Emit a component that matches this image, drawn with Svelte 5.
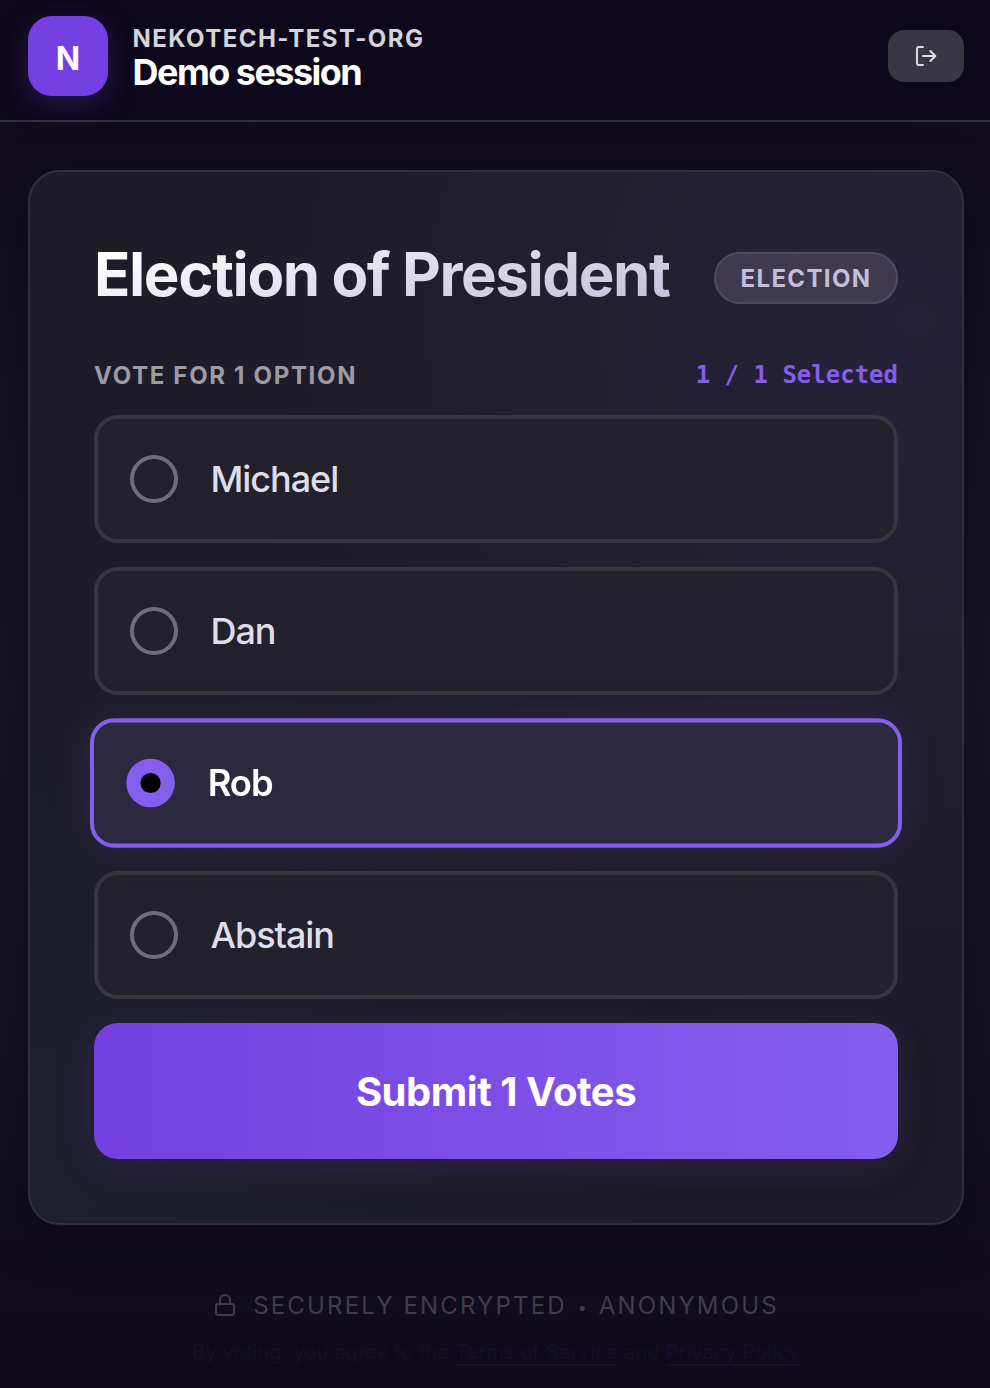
<script>
    /** @type {string[]} */
    const options = ['Michael', 'Dan', 'Rob', 'Abstain']
    const maxVotes = 1

    /** @type {string[]} */
    let selected = $state(['Rob'])

    /**
     * @param {string} name
     */
    function toggle(name) {
        if (selected.includes(name)) {
            selected = selected.filter((s) => s !== name)
            return
        }
        selected = maxVotes === 1 ? [name] : [...selected, name].slice(0, maxVotes)
    }
</script>

<div class="page">
    <header>
        <div class="brand">
            <div class="logo">N</div>
            <div class="names">
                <span class="org">NEKOTECH-TEST-ORG</span>
                <span class="session">Demo session</span>
            </div>
        </div>
        <button class="logout" aria-label="Log out">
            <svg width="24" height="24" viewBox="0 0 24 24">
                <path d="M9 3H5a2 2 0 0 0-2 2v14a2 2 0 0 0 2 2h4" />
                <path d="M9 12h12.2M16.4 7l5 5-5 5" />
            </svg>
        </button>
    </header>

    <main>
        <section class="card">
            <div class="title-row">
                <h1>Election of President</h1>
                <span class="pill">ELECTION</span>
            </div>
            <div class="info-row">
                <span class="hint">VOTE FOR {maxVotes} OPTION</span>
                <span class="count">{selected.length} / {maxVotes} Selected</span>
            </div>
            <div class="options">
                {#each options as name}
                    <button class="option" class:active={selected.includes(name)} onclick={() => toggle(name)}>
                        <span class="radio"></span>
                        <span class="name">{name}</span>
                    </button>
                {/each}
                <button class="submit">Submit {selected.length} Votes</button>
            </div>
        </section>
    </main>

    <footer>
        <div class="secure">
            <svg width="24" height="24" viewBox="0 0 24 24">
                <rect x="3" y="11" width="18" height="11" rx="2" />
                <path d="M7 11V7a5 5 0 0 1 10 0v4" />
            </svg>
            <span>SECURELY ENCRYPTED <span class="dot">•</span> ANONYMOUS</span>
        </div>
        <p class="legal">By voting, you agree to the <a href="#terms">Terms of Service</a> and <a href="#privacy">Privacy Policy</a></p>
    </footer>
</div>

<style>
    :global(body) {
        background: #0e091b;
    }
    .page {
        box-sizing: border-box;
        width: 990px;
        height: 1388px;
        overflow: hidden;
        display: flex;
        flex-direction: column;
        font-family: Inter, "Liberation Sans", sans-serif;
        background: linear-gradient(180deg, #0d081b 0%, #120e1e 12%, #1a1726 50%, #15111f 80%, #110c1e 93%, #0f0a1b 100%);
    }
    button {
        font-family: inherit;
        border: none;
        cursor: pointer;
    }
    svg {
        fill: none;
        stroke: currentColor;
        stroke-width: 2;
        stroke-linecap: round;
        stroke-linejoin: round;
    }

    /* HEADER */
    header {
        display: flex;
        justify-content: space-between;
        align-items: center;
        box-sizing: border-box;
        height: 122px;
        padding: 0 26px 8px 28px;
        border-bottom: 2px solid #34313e;
        background: #0d081b;
        flex: none;
    }
    .brand {
        display: flex;
        align-items: center;
        gap: 24px;
    }
    .logo {
        display: flex;
        align-items: center;
        justify-content: center;
        box-sizing: border-box;
        width: 80px;
        height: 80px;
        padding-top: 5px;
        border-radius: 24px;
        background: #763fe1;
        color: #fff;
        font-size: 32px;
        font-weight: 700;
        box-shadow: 0 8px 30px rgba(118, 63, 225, 0.25);
    }
    .names {
        display: flex;
        flex-direction: column;
        padding: 2px 0 0 0.5px;
    }
    .org {
        color: #d4d3dc;
        font-size: 24px;
        font-weight: 700;
        line-height: 29px;
        letter-spacing: 1.46px;
    }
    .session {
        color: #fff;
        font-size: 36px;
        font-weight: 700;
        line-height: 38px;
        letter-spacing: -1.53px;
    }
    .logout {
        display: flex;
        align-items: center;
        justify-content: center;
        width: 76px;
        height: 52px;
        padding: 0;
        border-radius: 16px;
        background: #393741;
        color: #dddce3;
    }

    /* CARD */
    main {
        padding: 48px 26px 0 28px;
    }
    .card {
        box-sizing: border-box;
        height: 1055px;
        padding: 64px;
        border: 2px solid #33303c;
        border-radius: 32px;
        background:
            radial-gradient(circle at 95% 14%, rgba(68, 56, 122, 0.22), transparent 58%),
            radial-gradient(circle at 0% 92%, rgba(30, 50, 78, 0.2), transparent 48%),
            #1e1c27;
        box-shadow: 0 12px 52px rgba(0, 0, 0, 0.34);
    }
    .title-row {
        display: flex;
        justify-content: space-between;
        align-items: center;
        height: 84px;
    }
    h1 {
        margin: 0;
        padding-bottom: 8px;
        font-size: 60px;
        font-weight: 700;
        line-height: 75px;
        letter-spacing: -1.43px;
        background: linear-gradient(165deg, #fff 8%, #dddbe8 52%, #c4bedb 95%);
        -webkit-background-clip: text;
        background-clip: text;
        color: transparent;
    }
    .pill {
        display: flex;
        align-items: center;
        justify-content: center;
        box-sizing: border-box;
        width: 184px;
        height: 52px;
        border: 2px solid #4f4a64;
        border-radius: 26px;
        background: #3f3a4f;
        color: #c4bedb;
        font-size: 24px;
        font-weight: 700;
        letter-spacing: 1.35px;
    }
    .info-row {
        display: flex;
        justify-content: space-between;
        align-items: center;
        height: 32px;
        margin: 39px 0 24px;
        font-size: 24px;
    }
    .hint {
        color: #9e9ba6;
        font-weight: 700;
        letter-spacing: 1.68px;
    }
    .count {
        color: #845eec;
        font-family: "DejaVu Sans Mono", monospace;
        font-weight: 700;
    }
    .options {
        display: flex;
        flex-direction: column;
        gap: 24px;
    }
    .option {
        display: flex;
        align-items: center;
        gap: 32px;
        box-sizing: border-box;
        height: 128px;
        padding: 0 32px;
        border: 4px solid #383641;
        border-radius: 24px;
        background: #23212b;
        color: #dfdde8;
        font-size: 36px;
        font-weight: 500;
        letter-spacing: -1.05px;
    }
    .name {
        padding-left: 0.5px;
    }
    .radio {
        display: flex;
        align-items: center;
        justify-content: center;
        box-sizing: border-box;
        width: 48px;
        height: 48px;
        border: 4px solid #706e78;
        border-radius: 50%;
    }
    .active {
        border-color: #845eec;
        background: #2c2840;
        color: #fff;
        transform: scale(1.01);
        box-shadow: 0 0 40px rgba(132, 94, 236, 0.14);
    }
    .active .radio {
        border-color: #845eec;
        background: #845eec;
    }
    .active .name {
        font-weight: 600;
    }
    .active .radio::after {
        content: '';
        width: 20px;
        height: 20px;
        border-radius: 50%;
        background: #000;
    }
    .submit {
        height: 136px;
        border-radius: 24px;
        background: linear-gradient(90deg, #763fe1, #845eec);
        color: #fff;
        font-size: 40px;
        font-weight: 700;
        letter-spacing: -0.48px;
        box-shadow: 0 8px 40px rgba(118, 63, 225, 0.15);
    }

    /* FOOTER */
    footer {
        display: flex;
        flex-direction: column;
        align-items: center;
        padding: 64px 0 0 2px;
    }
    .secure {
        display: flex;
        align-items: center;
        gap: 16px;
        height: 32px;
        color: #413d4a;
        font-size: 24px;
        letter-spacing: 2.16px;
    }
    .dot {
        margin: 0 1px 0 2px;
        font-size: 16px;
        vertical-align: 1px;
    }
    .legal {
        margin: 15px 0 0;
        color: #15111f;
        font-size: 20px;
        line-height: 32px;
        letter-spacing: 0.13px;
    }
    .legal a {
        color: #150f29;
        text-decoration: none;
        border-bottom: 2px solid #161029;
    }
</style>
